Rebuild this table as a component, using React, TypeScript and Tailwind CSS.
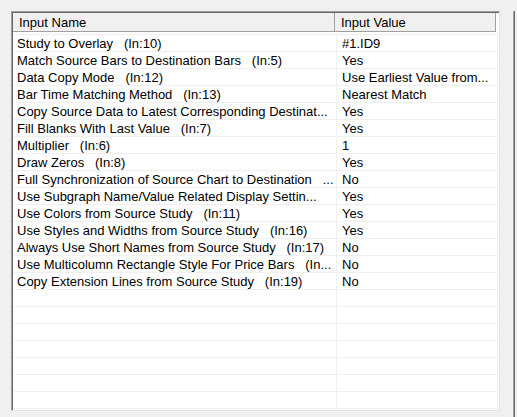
import React from "react";

const rows: [string, string][] = [
  ["Study to Overlay   (In:10)", "#1.ID9"],
  ["Match Source Bars to Destination Bars   (In:5)", "Yes"],
  ["Data Copy Mode   (In:12)", "Use Earliest Value from..."],
  ["Bar Time Matching Method   (In:13)", "Nearest Match"],
  ["Copy Source Data to Latest Corresponding Destinat...", "Yes"],
  ["Fill Blanks With Last Value   (In:7)", "Yes"],
  ["Multiplier   (In:6)", "1"],
  ["Draw Zeros   (In:8)", "Yes"],
  ["Full Synchronization of Source Chart to Destination   ...", "No"],
  ["Use Subgraph Name/Value Related Display Settin...", "Yes"],
  ["Use Colors from Source Study   (In:11)", "Yes"],
  ["Use Styles and Widths from Source Study   (In:16)", "Yes"],
  ["Always Use Short Names from Source Study   (In:17)", "No"],
  ["Use Multicolumn Rectangle Style For Price Bars   (In...", "No"],
  ["Copy Extension Lines from Source Study   (In:19)", "No"],
  ["", ""],
  ["", ""],
  ["", ""],
  ["", ""],
  ["", ""],
  ["", ""],
  ["", ""],
];

export default function App() {
  return (
    <div
      className="w-[517px] h-[417px] bg-[#f0f0f0] flex flex-row pl-[11px] pt-[11px] text-black text-[13px] overflow-hidden"
      style={{ fontFamily: '"Liberation Sans", Arial, sans-serif' }}
    >
      <div className="w-[489px] h-[400px] flex flex-col border-t border-l border-t-[#a0a0a0] border-l-[#a0a0a0] border-r border-b border-r-[#e3e3e3] border-b-[#e3e3e3] shrink-0">
        <div className="flex flex-col flex-1 border-t border-l border-t-[#696969] border-l-[#696969] bg-white">
          {/* header */}
          <div className="flex flex-row h-[19px] shrink-0">
            <div className="w-[322px] h-full bg-[#f0f0f0] border-r border-b border-[#a0a0a0] pl-[6px] flex items-center leading-none whitespace-pre">
              Input Name
            </div>
            <div className="w-[161px] h-full bg-[#f0f0f0] border-r border-b border-[#a0a0a0] pl-[6px] flex items-center leading-none whitespace-pre">
              Input Value
            </div>
            <div className="flex-1 h-full bg-white" />
          </div>
          <div className="h-[2px] shrink-0 bg-white" />
          <div className="h-px shrink-0 bg-[#f0f0f0] w-[485px]" />
          {rows.map(([name, value], i) => (
            <div key={i} className="flex flex-row h-[17px] shrink-0">
              <div className="w-[324px] h-full border-r border-b border-[#f0f0f0] pl-[4px] flex items-center leading-none whitespace-pre overflow-hidden">
                {name}
              </div>
              <div className="w-[161px] h-full border-r border-b border-[#f0f0f0] pl-[5px] flex items-center leading-none whitespace-pre overflow-hidden">
                {value}
              </div>
            </div>
          ))}
        </div>
      </div>
      <div className="w-[13px] shrink-0" />
      <div className="w-px h-full bg-[#a0a0a0] shrink-0" />
      <div className="w-px h-full bg-[#696969] shrink-0" />
    </div>
  );
}
